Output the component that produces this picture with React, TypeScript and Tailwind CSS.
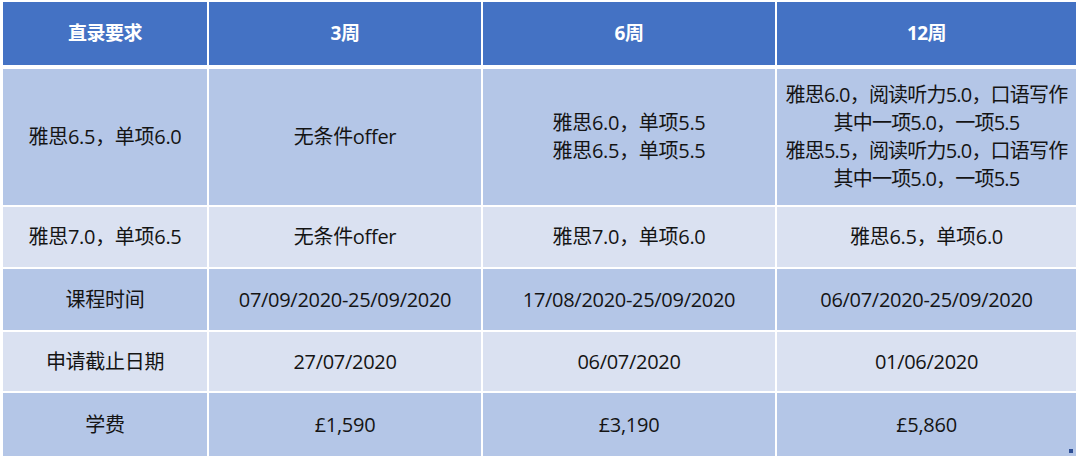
const cols = 'grid grid-cols-[204px_272px_292px_299px] gap-x-[2px]';

const rows: { h: string; bg: string; cells: string[][] }[] = [
  {
    h: 'h-[136px]',
    bg: 'bg-[#b4c6e7]',
    cells: [
      ['雅思6.5，单项6.0'],
      ['无条件offer'],
      ['雅思6.0，单项5.5', '雅思6.5，单项5.5'],
      ['雅思6.0，阅读听力5.0，口语写作', '其中一项5.0，一项5.5', '雅思5.5，阅读听力5.0，口语写作', '其中一项5.0，一项5.5'],
    ],
  },
  {
    h: 'h-[60px]',
    bg: 'bg-[#dae1f1]',
    cells: [['雅思7.0，单项6.5'], ['无条件offer'], ['雅思7.0，单项6.0'], ['雅思6.5，单项6.0']],
  },
  {
    h: 'h-[61px]',
    bg: 'bg-[#b4c6e7]',
    cells: [['课程时间'], ['07/09/2020-25/09/2020'], ['17/08/2020-25/09/2020'], ['06/07/2020-25/09/2020']],
  },
  {
    h: 'h-[59px]',
    bg: 'bg-[#dae1f1]',
    cells: [['申请截止日期'], ['27/07/2020'], ['06/07/2020'], ['01/06/2020']],
  },
  {
    h: 'h-[63px]',
    bg: 'bg-[#b4c6e7]',
    cells: [['学费'], ['£1,590'], ['£3,190'], ['£5,860']],
  },
];

export default function App() {
  return (
    <div
      className="w-[1080px] h-[462px] bg-white pt-[2px] pl-[3px] overflow-hidden"
      style={{ fontFamily: '"Open Sans", "Noto Sans CJK SC", sans-serif' }}
    >
      <div className="relative w-[1073px]">
        <div className={`${cols} h-[63px] text-[19px] font-bold text-white`}>
          {['直录要求', '3周', '6周', '12周'].map((t) => (
            <div key={t} className="bg-[#4472c4] flex items-center justify-center tracking-[-0.5px]">
              {t}
            </div>
          ))}
        </div>
        <div className="flex flex-col gap-y-[2px] mt-[4px]">
          {rows.map((r, i) => (
            <div key={i} className={`${cols} ${r.h} text-[20px] text-[#141414]`}>
              {r.cells.map((lines, j) => (
                <div
                  key={j}
                  className={`${r.bg} flex flex-col items-center justify-center leading-[28px] ${
                    lines.length > 2 ? 'tracking-[-0.8px]' : 'tracking-[-0.3px]'
                  }`}
                >
                  {lines.map((l, k) => (
                    <span key={k} className="whitespace-nowrap">{l}</span>
                  ))}
                </div>
              ))}
            </div>
          ))}
        </div>
        <div className="absolute right-[3px] bottom-[3px] w-[4px] h-[4px] bg-[#2f4f95]" />
      </div>
    </div>
  );
}
